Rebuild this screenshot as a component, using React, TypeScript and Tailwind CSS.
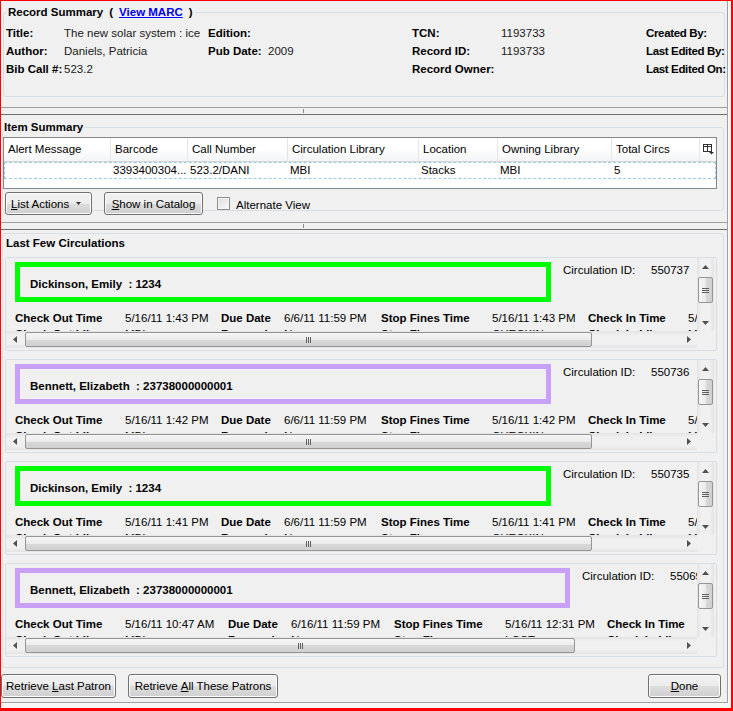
import React from 'react';

type Dir = 'up' | 'down' | 'left' | 'right';

function Tri({ dir }: { dir: Dir }) {
  if (dir === 'up' || dir === 'down') {
    return (
      <svg width="7" height="4" viewBox="0 0 7 4">
        <polygon points={dir === 'up' ? '0,4 3.5,0 7,4' : '0,0 3.5,4 7,0'} fill="#505050" />
      </svg>
    );
  }
  return (
    <svg width="4" height="7" viewBox="0 0 4 7">
      <polygon points={dir === 'left' ? '4,0 0,3.5 4,7' : '0,0 4,3.5 0,7'} fill="#505050" />
    </svg>
  );
}

function ColumnPicker() {
  return (
    <svg width="11" height="11" viewBox="0 0 11 11">
      <rect x="0.5" y="0.5" width="8" height="7" fill="none" stroke="#333" />
      <line x1="0.5" y1="2.5" x2="8.5" y2="2.5" stroke="#333" />
      <line x1="4.5" y1="0.5" x2="4.5" y2="7.5" stroke="#333" />
      <polygon points="6,8 11,8 8.5,10.5" fill="#333" />
    </svg>
  );
}

function WinButton({ children, className }: { children: React.ReactNode; className: string }) {
  return (
    <button
      className={`flex shrink-0 items-center rounded-[3px] border border-[#707070] bg-[linear-gradient(#f2f2f2_0%,#ebebeb_50%,#dddddd_50%,#cfcfcf_100%)] whitespace-nowrap text-black shadow-[inset_0_0_0_1px_#fcfcfc] ${className}`}
    >
      {children}
    </button>
  );
}

function Splitter({ className }: { className: string }) {
  return (
    <div className={`h-[8px] shrink-0 border-t border-b border-t-[#a0a0a0] border-b-[#6d6d6d] ${className}`}>
      <div className="mt-[1px] ml-[302px] h-[4px] w-[1px] bg-[#8c8c8c]" />
    </div>
  );
}

function HScroll({ thumb }: { thumb: string }) {
  return (
    <div className="flex h-[17px] w-[691px] items-center bg-[linear-gradient(#e3e3e3,#f0f0f0_25%,#f0f0f0_75%,#e3e3e3)]">
      <div className="flex h-full w-[17px] items-center justify-center">
        <Tri dir="left" />
      </div>
      <div
        className={`ml-[2px] flex h-[15px] items-center justify-center gap-[1px] rounded-[2px] border border-[#959595] bg-[linear-gradient(#f6f6f6,#ebebeb_50%,#d9d9d9_50%,#d0d0d0)] ${thumb}`}
      >
        <div className="h-[6px] w-[1px] bg-[#606060]" />
        <div className="h-[6px] w-[1px] bg-[#606060]" />
        <div className="h-[6px] w-[1px] bg-[#606060]" />
      </div>
      <div className="ml-auto flex h-full w-[17px] items-center justify-center">
        <Tri dir="right" />
      </div>
    </div>
  );
}

function VScroll() {
  return (
    <div className="flex h-[73px] w-[17px] shrink-0 flex-col bg-[linear-gradient(90deg,#e3e3e3,#f0f0f0_25%,#f0f0f0_75%,#e3e3e3)]">
      <div className="flex h-[17px] items-center justify-center">
        <Tri dir="up" />
      </div>
      <div className="mx-[1px] mt-[2px] flex h-[26px] flex-col items-center justify-center gap-[1px] rounded-[2px] border border-[#959595] bg-[linear-gradient(90deg,#f6f6f6,#ebebeb_50%,#d9d9d9_50%,#d0d0d0)]">
        <div className="h-[1px] w-[7px] bg-[#606060]" />
        <div className="h-[1px] w-[7px] bg-[#606060]" />
        <div className="h-[1px] w-[7px] bg-[#606060]" />
      </div>
      <div className="mt-auto flex h-[17px] items-center justify-center">
        <Tri dir="down" />
      </div>
    </div>
  );
}

const summary = [
  ['Title:', 'The new solar system : ice', 'Edition:', '', 'TCN:', '1193733', 'Created By:'],
  ['Author:', 'Daniels, Patricia', 'Pub Date:', '2009', 'Record ID:', '1193733', 'Last Edited By:'],
  ['Bib Call #:', '523.2', '', '', 'Record Owner:', '', 'Last Edited On:'],
];

const itemCols = [
  { label: 'Alert Message', w: 'w-[107px]', dw: 'w-[106px]', v: '' },
  { label: 'Barcode', w: 'w-[77px]', dw: 'w-[77px]', v: '3393400304...' },
  { label: 'Call Number', w: 'w-[100px]', dw: 'w-[100px]', v: '523.2/DANI' },
  { label: 'Circulation Library', w: 'w-[131px]', dw: 'w-[131px]', v: 'MBI' },
  { label: 'Location', w: 'w-[79px]', dw: 'w-[79px]', v: 'Stacks' },
  { label: 'Owning Library', w: 'w-[114px]', dw: 'w-[114px]', v: 'MBI' },
  { label: 'Total Circs', w: 'w-[88px]', dw: 'w-[88px]', v: '5' },
];

const narrow = 'grid-cols-[110px_96px_63px_97px_111px_96px_100px_100px]';

const circs = [
  {
    name: 'Dickinson, Emily',
    code: '1234',
    ring: 'border-[#00ff00]',
    boxW: 'w-[536px]',
    circId: '550737',
    cols: narrow,
    thumb: 'w-[567px]',
    row1: ['Check Out Time', '5/16/11 1:43 PM', 'Due Date', '6/6/11 11:59 PM', 'Stop Fines Time', '5/16/11 1:43 PM', 'Check In Time', '5/16/11 1:43 PM'],
    row2: ['Check Out Lib', 'MBI', 'Renewal', 'No', 'Stop Fines', 'CHECKIN', 'Check In Lib', 'MBI'],
  },
  {
    name: 'Bennett, Elizabeth',
    code: '23738000000001',
    ring: 'border-[#c9a0f7]',
    boxW: 'w-[536px]',
    circId: '550736',
    cols: narrow,
    thumb: 'w-[567px]',
    row1: ['Check Out Time', '5/16/11 1:42 PM', 'Due Date', '6/6/11 11:59 PM', 'Stop Fines Time', '5/16/11 1:42 PM', 'Check In Time', '5/16/11 1:42 PM'],
    row2: ['Check Out Lib', 'MBI', 'Renewal', 'No', 'Stop Fines', 'CHECKIN', 'Check In Lib', 'MBI'],
  },
  {
    name: 'Dickinson, Emily',
    code: '1234',
    ring: 'border-[#00ff00]',
    boxW: 'w-[536px]',
    circId: '550735',
    cols: narrow,
    thumb: 'w-[567px]',
    row1: ['Check Out Time', '5/16/11 1:41 PM', 'Due Date', '6/6/11 11:59 PM', 'Stop Fines Time', '5/16/11 1:41 PM', 'Check In Time', '5/16/11 1:41 PM'],
    row2: ['Check Out Lib', 'MBI', 'Renewal', 'No', 'Stop Fines', 'CHECKIN', 'Check In Lib', 'MBI'],
  },
  {
    name: 'Bennett, Elizabeth',
    code: '23738000000001',
    ring: 'border-[#c9a0f7]',
    boxW: 'w-[555px]',
    circId: '550691',
    cols: 'grid-cols-[110px_103px_63px_103px_111px_102px_100px_100px]',
    thumb: 'w-[550px]',
    row1: ['Check Out Time', '5/16/11 10:47 AM', 'Due Date', '6/16/11 11:59 PM', 'Stop Fines Time', '5/16/11 12:31 PM', 'Check In Time', '5/16/11 12:31 PM'],
    row2: ['Check Out Lib', 'MBI', 'Renewal', 'No', 'Stop Fines', 'LOST', 'Check In Lib', 'MBI'],
  },
];

type Circ = (typeof circs)[number];

function CircCard({ c }: { c: Circ }) {
  return (
    <div className="flex w-[712px] flex-col rounded-[2px] border border-[#d5dfe5] pb-[2px]">
      <div className="flex">
        <div className="h-[73px] w-[691px] overflow-hidden">
          <div className="mt-[4px] flex items-start whitespace-nowrap">
            <div className={`ml-[9px] h-[40px] shrink-0 border-[5px] pt-[9px] pl-[10px] font-bold ${c.ring} ${c.boxW}`}>
              {c.name}
              <span className="whitespace-pre">{'  : '}</span>
              {c.code}
            </div>
            <div className="ml-[12px] w-[88px] shrink-0">Circulation ID:</div>
            <div>{c.circId}</div>
          </div>
          <div className={`mt-[8px] ml-[9px] grid whitespace-nowrap ${c.cols}`}>
            {[...c.row1, ...c.row2].map((t, i) => (
              <div key={i} className={i % 2 === 0 ? 'font-bold' : ''}>
                {t}
              </div>
            ))}
          </div>
        </div>
        <VScroll />
      </div>
      <HScroll thumb={c.thumb} />
    </div>
  );
}

export default function App() {
  return (
    <div className="h-[711px] w-[733px] overflow-hidden border-t border-r-2 border-b-[3px] border-l border-[#ff0000] bg-[#f8f8f8] text-[11.5px] leading-[16px] text-black [font-family:'Liberation_Sans',Arial,sans-serif]">
      <div className="flex h-[702px] w-[727px] flex-col overflow-hidden border-r border-b border-[#a0a0a0] bg-[#f0f0f0]">
        {/* Record Summary */}
        <fieldset className="mx-[2px] mt-[3px] min-w-0 shrink-0 rounded-[3px] border border-[#d5dfe5]">
          <legend className="ml-[2px] px-[2px] font-bold">
            <span>Record Summary</span>
            <span className="ml-[6px]">(</span>
            <span className="ml-[6px] text-[#0000ee] underline">View MARC</span>
            <span className="ml-[6px]">)</span>
          </legend>
          <div className="grid grid-cols-[58px_144px_60px_144px_89px_145px_1fr] pt-[4px] pb-[18px] pl-[2px] whitespace-nowrap">
            {summary.map((row, r) =>
              row.map((t, i) => (
                <div
                  key={`${r}-${i}`}
                  className={`h-[18px] leading-[18px] ${i % 2 === 0 ? 'font-bold' : 'text-[#1a1a1a]'} ${i === 6 ? 'tracking-[-0.35px]' : ''}`}
                >
                  {t}
                </div>
              )),
            )}
          </div>
        </fieldset>

        <Splitter className="mt-[10px]" />

        {/* Item Summary */}
        <fieldset className="mt-[4px] mr-[3px] ml-[1px] min-w-0 shrink-0 rounded-[3px] border border-[#d5dfe5]">
          <legend className="px-[1px] font-bold">Item Summary</legend>
          <div className="flex flex-col">
            <div className="mt-[2px] flex h-[52px] w-[714px] flex-col border border-[#828790] bg-white">
              <div className="flex h-[24px] border-b border-[#d5d5d5] bg-[linear-gradient(#ffffff,#ffffff_50%,#f3f4f6)]">
                {itemCols.map((c) => (
                  <div key={c.label} className={`shrink-0 border-r border-[#e5e5e5] pl-[4px] leading-[23px] whitespace-nowrap ${c.w}`}>
                    {c.label}
                  </div>
                ))}
                <div className="flex flex-1 items-center justify-center">
                  <ColumnPicker />
                </div>
              </div>
              <div className="flex h-[17px] border border-dashed border-[#9ccbe5]">
                {itemCols.map((c) => (
                  <div key={c.label} className={`shrink-0 pl-[2px] leading-[15px] whitespace-nowrap ${c.dw}`}>
                    {c.v}
                  </div>
                ))}
              </div>
            </div>
            <div className="mt-[3px] mb-[-5px] flex h-[23px] items-center">
              <WinButton className="ml-[2px] h-[23px] w-[87px] pl-[5px]">
                <span className="underline">L</span>ist Actions
                <span className="ml-[7px] inline-flex">
                  <svg width="5" height="3" viewBox="0 0 5 3">
                    <polygon points="0,0 5,0 2.5,3" fill="#333" />
                  </svg>
                </span>
              </WinButton>
              <WinButton className="ml-[12px] h-[23px] w-[99px] justify-center">
                <span className="underline">S</span>how in Catalog
              </WinButton>
              <div className="ml-[14px] h-[13px] w-[13px] shrink-0 border border-[#8e8f8f] bg-[linear-gradient(135deg,#dcdcdc,#fbfbfb)] shadow-[inset_0_0_0_1px_#f4f4f4]" />
              <span className="ml-[6px] pt-[2px]">Alternate View</span>
            </div>
          </div>
        </fieldset>

        <Splitter className="mt-[11px]" />

        {/* Last Few Circulations */}
        <div className="mt-[3px] mr-[3px] ml-[1px] flex shrink-0 flex-col rounded-[3px] border border-[#d5dfe5] pt-[1px] pb-[10px]">
          <div className="pl-[3px] font-bold">Last Few Circulations</div>
          <div className="mt-[6px] ml-[2px] flex flex-col gap-[8px]">
            {circs.map((c, i) => (
              <CircCard key={i} c={c} />
            ))}
          </div>
        </div>

        <div className="mt-[6px] flex h-[24px] shrink-0">
          <WinButton className="w-[115px] justify-center">
            Retrieve&nbsp;<span className="underline">L</span>ast Patron
          </WinButton>
          <WinButton className="ml-[12px] w-[150px] justify-center">
            Retrieve&nbsp;<span className="underline">A</span>ll These Patrons
          </WinButton>
          <WinButton className="mr-[6px] ml-auto w-[73px] justify-center">
            <span className="underline">D</span>one
          </WinButton>
        </div>
      </div>
    </div>
  );
}
